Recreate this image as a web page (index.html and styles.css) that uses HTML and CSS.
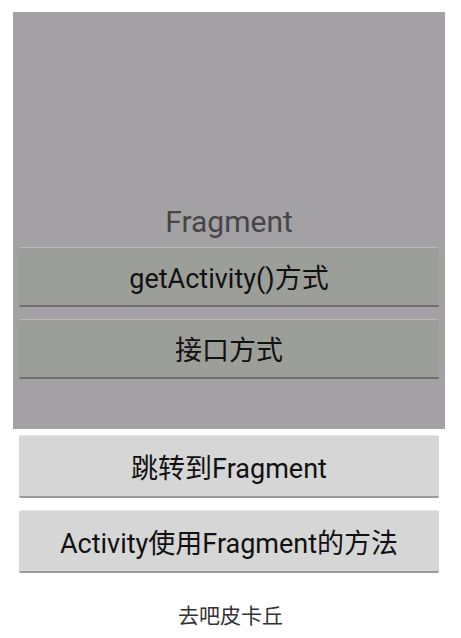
FILE: index.html
```html
<!DOCTYPE html>
<html lang="zh">
<head>
    <meta charset="UTF-8">
    <meta name="viewport" content="width=device-width, initial-scale=1.0">
    <title>Fragment</title>
    <link rel="stylesheet" href="styles.css">
</head>
<body>
    <div class="fragment">
        <div class="title">Fragment</div>
        <div class="btn dark">getActivity()方式</div>
        <div class="btn dark">接口方式</div>
    </div>

    <div class="actions">
        <div class="btn light">跳转到Fragment</div>
        <div class="btn light">Activity使用Fragment的方法</div>
    </div>

    <div class="hint">去吧皮卡丘</div>
</body>
</html>
```

FILE: styles.css
```css
    body {
        margin: 0;
        background-color: white;
        font-family: Roboto, "Noto Sans CJK SC", sans-serif;
        color: #111;
    }

    .fragment {
        margin: 12px 0 0 13px;
        width: 432px;
        height: 417px;
        box-sizing: border-box;
        padding: 0 6px 50px 6px;
        background-color: #a3a1a3;

        display: flex;
        flex-direction: column;
        justify-content: flex-end;
        gap: 12px;
    }

    .title {
        font-size: 30px;
        line-height: 34px;
        text-align: center;
        color: #464646;
        margin-bottom: -4px;
    }

    .btn {
        height: 60px;
        box-sizing: border-box;
        display: flex;
        justify-content: center;
        align-items: center;
        font-size: 27px;
        border-radius: 2px;
    }

    .dark {
        background-color: #9c9e9a;
        border-top: 1px solid #b9bab8;
        border-bottom: 2px solid #6f706e;
    }

    .light {
        background-color: #d6d6d6;
        border-top: 1px solid #e6e6e6;
        border-bottom: 2px solid #9a9a9a;
        height: 63px;
    }

    .actions {
        margin: 6px 0 0 19px;
        width: 420px;
        display: flex;
        flex-direction: column;
        gap: 12px;
    }

    .hint {
        margin-top: 26px;
        text-align: center;
        font-size: 21px;
        color: #333;
        width: 461px;
    }
```
